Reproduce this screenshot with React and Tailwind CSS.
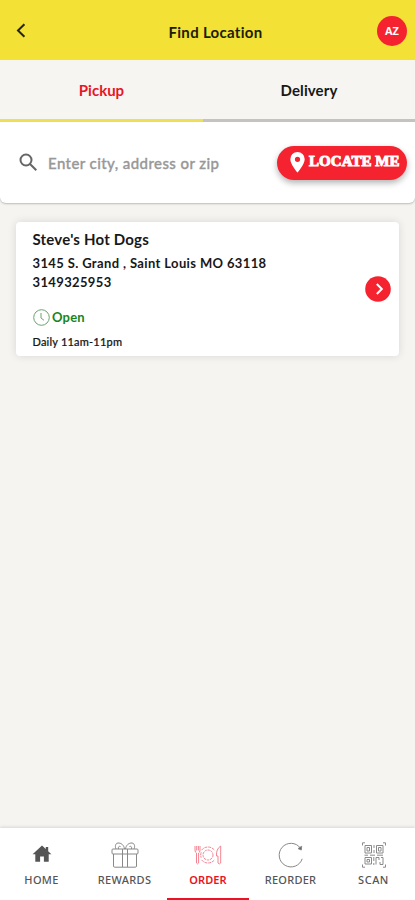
import React from "react";

const lato = "font-['Lato','Noto_Sans',sans-serif]";
const ink = "text-[#181818]";

// A line of text whose box is positioned by its parent's flow.
function T({ className, children }) {
  return <span className={`block whitespace-nowrap ${className}`}>{children}</span>;
}

function HomeIcon() {
  return (
    <svg width="20" height="18" viewBox="0 0 20 18" fill="#555">
      <path d="M10 0.5 L0.6 9.3 H3.3 V16.8 H8.1 V11.5 H11.9 V16.8 H16.7 V9.3 H19.4 L16.2 6.3 V2 H13.8 V4 Z" />
    </svg>
  );
}

function GiftIcon() {
  return (
    <svg width="28" height="26" viewBox="0 0 28 26" fill="none" stroke="#888" strokeWidth="1">
      <rect x="1" y="7" width="26" height="5" rx="1" />
      <path d="M2.5 12 V24 Q2.5 25.2 3.7 25.2 H24.3 Q25.5 25.2 25.5 24 V12 M11.5 7 V25 M16.5 7 V25" />
      <path d="M13.5 7 C13 3 10 0.8 7 1 C4 1.4 4 5 5 7 M7.5 7 C7 5 8 3.8 9.5 4.5 M14.5 7 C15 3 18 0.8 21 1 C24 1.4 24 5 23 7 M20.5 7 C21 5 20 3.8 18.5 4.5" />
    </svg>
  );
}

function OrderIcon() {
  return (
    <svg width="28" height="20" viewBox="0 0 28 20" fill="none" stroke="#f28591" strokeWidth="1">
      <path d="M1 1 V5 Q1 7.5 2.5 8 V18 Q3.5 19.8 4.6 18 V8 Q6 7.5 6 5 V1 M2.7 1 V5.5 M4.4 1 V5.5" />
      <circle cx="14" cy="10" r="5" strokeDasharray="2.4 .8" />
      <path d="M7.5 5.2 A8.2 8.2 0 0 1 20.5 5.2 M7.5 14.8 A8.2 8.2 0 0 0 20.5 14.8 M7.2 7.3 A7.5 7.5 0 0 0 7.2 12.7" strokeDasharray="3 .8" />
      <path d="M26.7 1 Q22 4 22.5 11 H24 V18 Q25.4 19.8 26.7 18 Z" />
    </svg>
  );
}

function ReorderIcon() {
  return (
    <svg width="26" height="26" viewBox="0 0 26 26" fill="none" stroke="#888" strokeWidth="1">
      <path d="M24.2 16.8 A11.8 11.8 0 1 1 22.4 6" />
      <path d="M20 6.6 L23.3 8 L23.7 4.3 Z" fill="#666" />
    </svg>
  );
}

function ScanIcon() {
  return (
    <svg width="24" height="26" viewBox="0 0 24 26" fill="none" stroke="#8a8a8a" strokeWidth="1">
      <path d="M.5 3.5 V.8 H3 M21 .8 H23.5 V3.5 M.5 22.5 V25.2 H3 M21 25.2 H23.5 V22.5" />
      <path d="M3 3.5 H9.5 V11 H3 Z M14.5 3.5 H21 V11 H14.5 Z M3 15.5 H9.5 V22 H3 Z M14 22.5 V15.5 H17 V18 M19 15.5 H21 V22.5 H18 V20" />
      <path d="M5 5.5 H7.5 V9 H5 Z M16.5 5.5 H19 V9 H16.5 Z M5 17.5 H7.5 V20 H5 Z M12 3 V6 M12 8 V11 M11.8 15 V19 M11.8 21 V23 M2.5 13.2 H6 M8 13.2 H13 M15 13.2 H21" />
    </svg>
  );
}

const tabs = [
  { name: "HOME", Icon: HomeIcon, box: "pt-[3px]", tracking: "tracking-[0.3px]" },
  { name: "REWARDS", Icon: GiftIcon, box: "", tracking: "tracking-[0.35px]" },
  { name: "ORDER", Icon: OrderIcon, box: "pt-[3px]", active: true, tracking: "tracking-[0.1px]" },
  { name: "REORDER", Icon: ReorderIcon, box: "", tracking: "tracking-[0.25px]" },
  { name: "SCAN", Icon: ScanIcon, box: "", tracking: "tracking-[0.5px]" },
];

export default function App() {
  return (
    <div className={`flex h-[900px] w-[415px] flex-col overflow-hidden bg-[#f5f4f0] ${lato}`}>
      <header className="flex h-[60px] shrink-0 items-center justify-between bg-[#f3e135] pl-4 pr-[8px]">
        <div className="w-[38px]">
          <svg width="10" height="15" viewBox="0 0 10 15" fill="none" stroke="#242410" strokeWidth="2">
            <path d="M8.4 1.2 L2 7.5 L8.4 13.8" />
          </svg>
        </div>
        <T className="pt-1 text-[15px] font-bold leading-5 tracking-[0.3px] text-[#1d1c08]">Find Location</T>
        <div className="mt-px flex size-[30px] items-center justify-center rounded-full bg-[#f5222f] pt-px font-['Open_Sans',sans-serif] text-[11px] font-bold text-white">AZ</div>
      </header>

      <nav className="flex h-[62px] shrink-0 bg-[#f6f5f2] text-[15px] font-bold">
        <div className="flex w-[203px] items-center justify-center border-b-[3px] border-[#efdf57] pt-px text-[#e81425]">Pickup</div>
        <div className={`flex flex-1 items-center justify-center border-b-[3px] border-[#c5c2c1] pt-px tracking-[0.1px] ${ink}`}>Delivery</div>
      </nav>

      <section className="flex h-[81px] shrink-0 items-center rounded-b-md bg-white pl-[19px] pr-2 shadow-[0_1px_2px_#bbb]">
        <svg width="19" height="19" viewBox="0 0 19 19" fill="none" stroke="#666" strokeWidth="2">
          <circle cx="7" cy="7" r="5.5" />
          <path d="M11 11 L17.3 17.3" />
        </svg>
        <T className="ml-[10px] flex-1 pt-[2px] text-[15px] font-medium tracking-[0.42px] text-[#989898] [-webkit-text-stroke:0.35px_#989898]">Enter city, address or zip</T>
        <button className="flex h-[34px] w-[130px] items-center rounded-full bg-[#f5222f] pl-[13px] text-white shadow-[0_3px_6px_rgba(0,0,0,0.3)]">
          <svg width="15" height="21" viewBox="0 0 15 21" fill="white">
            <path fillRule="evenodd" d="M7.5 0 A7.2 7.2 0 0 0 .3 7.2 C.3 12.2 7.5 20.5 7.5 20.5 C7.5 20.5 14.7 12.2 14.7 7.2 A7.2 7.2 0 0 0 7.5 0 Z M7.5 4.7 A2.6 2.6 0 1 1 7.5 9.9 A2.6 2.6 0 0 1 7.5 4.7 Z" />
          </svg>
          <span className="ml-[4px] mt-[-3px] whitespace-nowrap font-['Liberation_Serif',serif] text-[15px] font-bold tracking-[0.05px] [-webkit-text-stroke:1px_white]">LOCATE ME</span>
        </button>
      </section>

      <main className="flex-1 px-4 pt-[19px]">
        <article className={`flex h-[134px] items-center justify-between rounded bg-white pl-[16.5px] pr-[8px] shadow-[0_0_9px_rgba(0,0,0,0.12)] ${ink}`}>
          <div className="flex h-full flex-col pt-[7px]">
            <T className="text-[15px] font-bold leading-5 tracking-[0.2px]">Steve's Hot Dogs</T>
            <T className="mt-[5px] text-[13px] font-bold leading-[19px] tracking-[0.37px]">3145 S. Grand , Saint Louis MO 63118</T>
            <T className="text-[13px] font-bold leading-[19px] tracking-[0.37px]">3149325953</T>
            <div className="mt-[16px] flex h-[18px] items-center text-[#168521]">
              <svg width="17" height="17" viewBox="0 0 17 17" fill="none" stroke="#69a36d" strokeWidth="1">
                <circle cx="8.5" cy="8.5" r="7.8" />
                <path d="M8 4 V9 L11 11.3" />
              </svg>
              <T className="ml-[2.5px] pt-px text-[13px] font-bold tracking-[0.2px]">Open</T>
            </div>
            <T className="mt-[8px] text-[11px] font-medium leading-4 tracking-[0.2px] [-webkit-text-stroke:0.2px_#181818]">Daily 11am-11pm</T>
          </div>
          <svg className="mb-px" width="26" height="26" viewBox="0 0 26 26" fill="none">
            <circle cx="13" cy="13" r="12.8" fill="#f5222f" />
            <path d="M11.8 8 L16.8 13 L11.8 18" stroke="white" strokeWidth="2" />
          </svg>
        </article>
      </main>

      <footer className="grid h-[72px] shrink-0 grid-cols-5 bg-white shadow-[0_-1px_3px_rgba(0,0,0,0.12)]">
        {tabs.map(({ name, Icon, box, active, tracking }) => (
          <div key={name} className={`flex flex-col items-center border-b-2 pt-[14px] ${active ? "ml-px border-[#e81425] text-[#e81425]" : "border-transparent text-[#555]"}`}>
            <div className={`h-[28px] ${box}`}><Icon /></div>
            <T className={`mt-[2px] font-['Noto_Sans',sans-serif] text-[11px] leading-4 ${active ? "font-semibold" : "font-medium"} ${tracking}`}>{name}</T>
          </div>
        ))}
      </footer>
    </div>
  );
}
